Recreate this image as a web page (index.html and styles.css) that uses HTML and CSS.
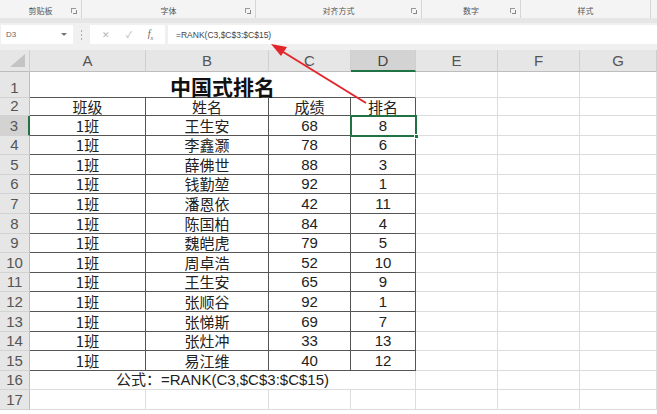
FILE: index.html
```html
<!DOCTYPE html>
<html lang="zh">
<head>
<meta charset="utf-8">
<link rel="stylesheet" href="styles.css">
</head>
<body>
<div class="app">
  <div class="ribbon">
    <div class="grp g1"><span>剪贴板</span><i class="launch"></i></div>
    <div class="grp g2"><span>字体</span><i class="launch"></i></div>
    <div class="grp g3"><span>对齐方式</span><i class="launch"></i></div>
    <div class="grp g4"><span>数字</span><i class="launch"></i></div>
    <div class="grp g5"><span>样式</span></div>
    <div class="grp g6"></div>
  </div>
  <div class="band"></div>
  <div class="fbar">
    <div class="namebox"><span>D3</span><i class="caret"></i></div>
    <div class="dots"><i></i><i></i><i></i></div>
    <div class="fbtns"><span class="x">✕</span><span class="ok">✓</span><span class="fx">f<sub>x</sub></span></div>
    <div class="finput">=RANK(C3,$C$3:$C$15)</div>
  </div>
  <div class="gap"></div>
  <div class="sheet">
    <div class="corner"><svg width="18" height="14" viewBox="0 0 18 14"><polygon points="17,0 17,13 2,13" fill="#c4c4c4"/></svg></div>
    <div class="h">A</div><div class="h">B</div><div class="h">C</div><div class="h sel">D</div><div class="h">E</div><div class="h">F</div><div class="h">G</div>

    <div class="r">1</div><div class="title">中国式排名</div><div class="c"></div><div class="c"></div><div class="c"></div>

    <div class="r">2</div><div class="t hd">班级</div><div class="t hd">姓名</div><div class="t hd">成绩</div><div class="t hd">排名</div><div class="c"></div><div class="c"></div><div class="c"></div>

    <div class="r rsel">3</div><div class="t">1班</div><div class="t">王生安</div><div class="t n">68</div><div class="t n active">8<i class="handle"></i></div><div class="c"></div><div class="c"></div><div class="c"></div>
    <div class="r">4</div><div class="t">1班</div><div class="t">李鑫灏</div><div class="t n">78</div><div class="t n">6</div><div class="c"></div><div class="c"></div><div class="c"></div>
    <div class="r">5</div><div class="t">1班</div><div class="t">薛佛世</div><div class="t n">88</div><div class="t n">3</div><div class="c"></div><div class="c"></div><div class="c"></div>
    <div class="r">6</div><div class="t">1班</div><div class="t">钱勤堃</div><div class="t n">92</div><div class="t n">1</div><div class="c"></div><div class="c"></div><div class="c"></div>
    <div class="r">7</div><div class="t">1班</div><div class="t">潘恩依</div><div class="t n">42</div><div class="t n">11</div><div class="c"></div><div class="c"></div><div class="c"></div>
    <div class="r">8</div><div class="t">1班</div><div class="t">陈国柏</div><div class="t n">84</div><div class="t n">4</div><div class="c"></div><div class="c"></div><div class="c"></div>
    <div class="r">9</div><div class="t">1班</div><div class="t">魏皑虎</div><div class="t n">79</div><div class="t n">5</div><div class="c"></div><div class="c"></div><div class="c"></div>
    <div class="r">10</div><div class="t">1班</div><div class="t">周卓浩</div><div class="t n">52</div><div class="t n">10</div><div class="c"></div><div class="c"></div><div class="c"></div>
    <div class="r">11</div><div class="t">1班</div><div class="t">王生安</div><div class="t n">65</div><div class="t n">9</div><div class="c"></div><div class="c"></div><div class="c"></div>
    <div class="r">12</div><div class="t">1班</div><div class="t">张顺谷</div><div class="t n">92</div><div class="t n">1</div><div class="c"></div><div class="c"></div><div class="c"></div>
    <div class="r">13</div><div class="t">1班</div><div class="t">张悌斯</div><div class="t n">69</div><div class="t n">7</div><div class="c"></div><div class="c"></div><div class="c"></div>
    <div class="r">14</div><div class="t">1班</div><div class="t">张灶冲</div><div class="t n">33</div><div class="t n">13</div><div class="c"></div><div class="c"></div><div class="c"></div>
    <div class="r">15</div><div class="t">1班</div><div class="t">易江维</div><div class="t n">40</div><div class="t n">12</div><div class="c"></div><div class="c"></div><div class="c"></div>

    <div class="r">16</div><div class="note">公式：=RANK(C3,$C$3:$C$15)</div><div class="c"></div><div class="c"></div><div class="c"></div>
    <div class="r">17</div><div class="c"></div><div class="c"></div><div class="c"></div><div class="c"></div><div class="c"></div><div class="c"></div><div class="c"></div>
  </div>
  <svg class="arrow" width="657" height="414" viewBox="0 0 657 414">
    <line x1="366" y1="103" x2="280" y2="50" stroke="#e3262c" stroke-width="2"/>
    <polygon points="271,44 287,47 281,56" fill="#e3262c"/>
  </svg>
</div>
</body>
</html>
```

FILE: styles.css
```css
* { box-sizing: border-box; }
html, body { margin: 0; padding: 0; }
body {
  width: 657px;
  height: 414px;
  overflow: hidden;
  background: #fff;
  font-family: "Liberation Sans", "Noto Sans CJK SC", sans-serif;
}
.app { position: relative; width: 657px; height: 414px; overflow: hidden; }

.ribbon {
  height: 18px;
  display: flex;
  background: #f4f4f4;
}
.grp {
  position: relative;
  display: flex;
  align-items: center;
  justify-content: center;
  border-right: 1px solid #d6d6d6;
  font-family: "Noto Sans CJK SC", sans-serif;
  font-size: 8px;
  color: #555;
  padding-top: 2px;
}
.g1 { width: 82px; }
.g2 { width: 174px; }
.g3 { width: 166px; }
.g4 { width: 99px; }
.g5 { width: 130px; }
.g6 { flex: 1; border-right: none; }
.launch {
  position: absolute;
  right: 5px;
  top: 8px;
  width: 5px;
  height: 5px;
  border-left: 1px solid #999;
  border-top: 1px solid #999;
}
.launch::after {
  content: "";
  position: absolute;
  left: 1px;
  top: 1px;
  width: 3px;
  height: 3px;
  border-right: 1px solid #888;
  border-bottom: 1px solid #888;
}

.band { height: 5px; background: #e6e6e6; }

.fbar {
  height: 22px;
  display: flex;
  align-items: stretch;
  background: #f0f0f0;
  padding: 2px 0 1px 1px;
}
.namebox {
  width: 72px;
  background: #fff;
  display: flex;
  align-items: center;
  justify-content: space-between;
  padding: 0 6px 0 5px;
  font-size: 8px;
  color: #666;
}
.caret {
  width: 0; height: 0;
  border-left: 3px solid transparent;
  border-right: 3px solid transparent;
  border-top: 3px solid #777;
}
.dots {
  width: 17px;
  display: flex;
  flex-direction: column;
  align-items: center;
  justify-content: center;
  gap: 2px;
}
.dots i { width: 1px; height: 2px; background: #aaa; }
.fbtns {
  width: 75px;
  background: #fff;
  display: flex;
  align-items: center;
  justify-content: space-around;
  padding: 0 4px;
  color: #b5b5b5;
  font-size: 9px;
}
.fbtns .fx {
  font-family: "Liberation Serif", serif;
  font-style: italic;
  color: #666;
  font-size: 10px;
}
.fbtns .fx sub { font-size: 6px; }
.finput {
  flex: 1;
  margin-left: 3px;
  background: #fff;
  display: flex;
  align-items: center;
  padding-left: 8px;
  font-size: 8.5px;
  color: #444;
}

.gap { height: 5px; background: #f0f0f0; }

.sheet {
  display: grid;
  grid-template-columns: 30px 116px 123px 82px 65px 82px 82px 77px;
  grid-template-rows: 22px 26px 18px repeat(15, 19.6px);
  font-size: 15px;
  color: #222;
}
.corner {
  background: #e6e6e6;
  border-right: 1px solid #cfcfcf;
  border-bottom: 1px solid #bdbdbd;
  display: flex;
  align-items: flex-end;
  justify-content: flex-end;
  padding: 0 3px 3px 0;
}
.h {
  background: #e6e6e6;
  border-right: 1px solid #cfcfcf;
  border-bottom: 1px solid #bdbdbd;
  display: flex;
  align-items: center;
  justify-content: center;
  font-size: 15px;
  color: #555;
}
.h.sel {
  background: #d3d3d3;
  border-bottom: 2px solid #217346;
  color: #444;
}
.r {
  background: #e6e6e6;
  border-right: 1px solid #bdbdbd;
  border-bottom: 1px solid #d2d2d2;
  display: flex;
  align-items: flex-end;
  justify-content: center;
  line-height: 18px;
  font-size: 15px;
  color: #555;
}
.r.rsel {
  background: #d3d3d3;
  border-right: 2px solid #217346;
}
.c {
  border-right: 1px solid #dcdcdc;
  border-bottom: 1px solid #dcdcdc;
}
.t {
  position: relative;
  border-right: 1px solid #555;
  border-bottom: 1px solid #555;
  display: flex;
  align-items: flex-end;
  justify-content: center;
  line-height: 18px;
  font-family: "Noto Sans CJK SC", sans-serif;
  font-size: 15px;
  color: #222;
  white-space: nowrap;
}
.t.hd {
  align-items: center;
  line-height: 16px;
  padding-top: 1px;
}
.t.n { font-family: "Liberation Sans", sans-serif; }
.title {
  grid-column: span 4;
  border-bottom: 1px solid #555;
  border-right: 1px solid #dcdcdc;
  display: flex;
  align-items: center;
  justify-content: center;
  font-family: "Noto Sans CJK SC", sans-serif;
  font-weight: 700;
  font-size: 21px;
  line-height: 22px;
  color: #111;
  padding-top: 2px;
}
.note {
  grid-column: span 4;
  border-right: 1px solid #dcdcdc;
  border-bottom: 1px solid #dcdcdc;
  display: flex;
  align-items: flex-end;
  justify-content: center;
  line-height: 18px;
  font-size: 15px;
  color: #222;
  font-family: "Liberation Sans", "Noto Sans CJK SC", sans-serif;
}
.active {
  outline: 2px solid #217346;
  outline-offset: -1px;
  z-index: 2;
}
.handle {
  position: absolute;
  right: -4px;
  bottom: -4px;
  width: 5px;
  height: 5px;
  background: #217346;
  border: 1px solid #fff;
}
.arrow {
  position: absolute;
  left: 0;
  top: 0;
  pointer-events: none;
  z-index: 5;
}
```
